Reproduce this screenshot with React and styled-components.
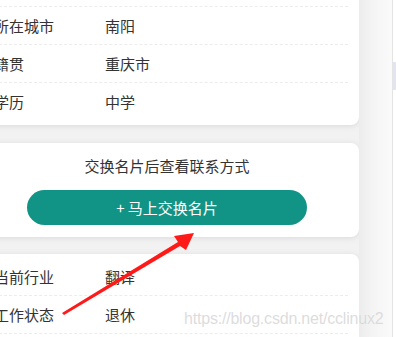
import React from "react";
import styled, { createGlobalStyle } from "styled-components";

const GlobalStyle = createGlobalStyle`
  html, body {
    margin: 0;
    padding: 0;
    background: #f2f2f2;
    font-family: "Noto Sans CJK SC", "Noto Sans", sans-serif;
  }
`;

const Page = styled.div`
  position: relative;
  display: flex;
  width: 396px;
  height: 337px;
  overflow: hidden;
`;

const Content = styled.div`
  flex: none;
  width: 384px;
  margin-left: -25px;
  margin-top: -35px;
  display: flex;
  flex-direction: column;
`;

const Gutter = styled.div`
  flex: none;
  width: 33px;
  background: linear-gradient(to right, #ececec, #f4f4f4 40%, #fafafa);
  border-right: 1px solid #e4e4e4;
`;

const Scrollbar = styled.div`
  flex: 1;
  background: #fff;
  padding-top: 62px;
`;

const Thumb = styled.div`
  height: 28px;
  background: #e2e4f0;
`;

const Card = styled.div`
  background: #fff;
  border-radius: 8px;
  box-shadow: 0 1px 6px rgba(0, 0, 0, 0.1);
  padding: ${(p) => p.$pad || "4px 0 3px"};
  margin-top: ${(p) => p.$top || 0}px;
`;

const Row = styled.div`
  display: flex;
  align-items: center;
  height: 37px;
  margin: 0 11px 0 19px;
  border-bottom: ${(p) => (p.$last ? "none" : "1px dashed #ececec")};
  font-size: 15px;
  line-height: 20px;
  color: #333;
`;

const Label = styled.span`
  width: 111px;
  flex: none;
`;

const Value = styled.span``;

const Hint = styled.div`
  text-align: center;
  font-size: 15px;
  line-height: 20px;
  color: #333;
`;

const Button = styled.button`
  display: block;
  width: 280px;
  height: 35px;
  margin: 14px auto 0;
  border: none;
  border-radius: 18px;
  background: #119486;
  color: #fff;
  font-family: inherit;
  font-size: 15px;
  font-weight: 400;
`;

const Arrow = styled.svg`
  position: absolute;
  left: 0;
  top: 0;
  pointer-events: none;
`;

const Watermark = styled.div`
  position: absolute;
  left: 184px;
  top: 310px;
  font-family: "Liberation Sans", Arial, sans-serif;
  font-size: 16px;
  letter-spacing: -0.2px;
  color: rgba(205, 205, 205, 0.7);
  text-shadow: 0 0 1px rgba(255, 255, 255, 0.6);
`;

const InfoCard = ({ rows, top, pad }) => (
  <Card $top={top} $pad={pad}>
    {rows.map(([k, v], i) => (
      <Row key={k} $last={i === rows.length - 1}>
        <Label>{k}</Label>
        <Value>{v}</Value>
      </Row>
    ))}
  </Card>
);

export default function App() {
  return (
    <Page>
      <GlobalStyle />
      <Content>
        <InfoCard
          pad="4px 0 5px"
          rows={[
            ["年龄", "60岁"],
            ["所在城市", "南阳"],
            ["籍贯", "重庆市"],
            ["学历", "中学"],
          ]}
        />
        <Card $top={18} $pad="13px 0 12px">
          <Hint>交换名片后查看联系方式</Hint>
          <Button>+ 马上交换名片</Button>
        </Card>
        <InfoCard
          top={17}
          rows={[
            ["当前行业", "翻译"],
            ["工作状态", "退休"],
            ["婚姻状况", "已婚"],
          ]}
        />
      </Content>
      <Gutter />
      <Scrollbar>
        <Thumb />
      </Scrollbar>
      <Arrow width="396" height="337" viewBox="0 0 396 337">
        <polygon
          points="62,313 64,315 180,246 186,250 194,233 174,236 178,242"
          fill="#ff1a1a"
        />
      </Arrow>
      <Watermark>https://blog.csdn.net/cclinux2</Watermark>
    </Page>
  );
}
